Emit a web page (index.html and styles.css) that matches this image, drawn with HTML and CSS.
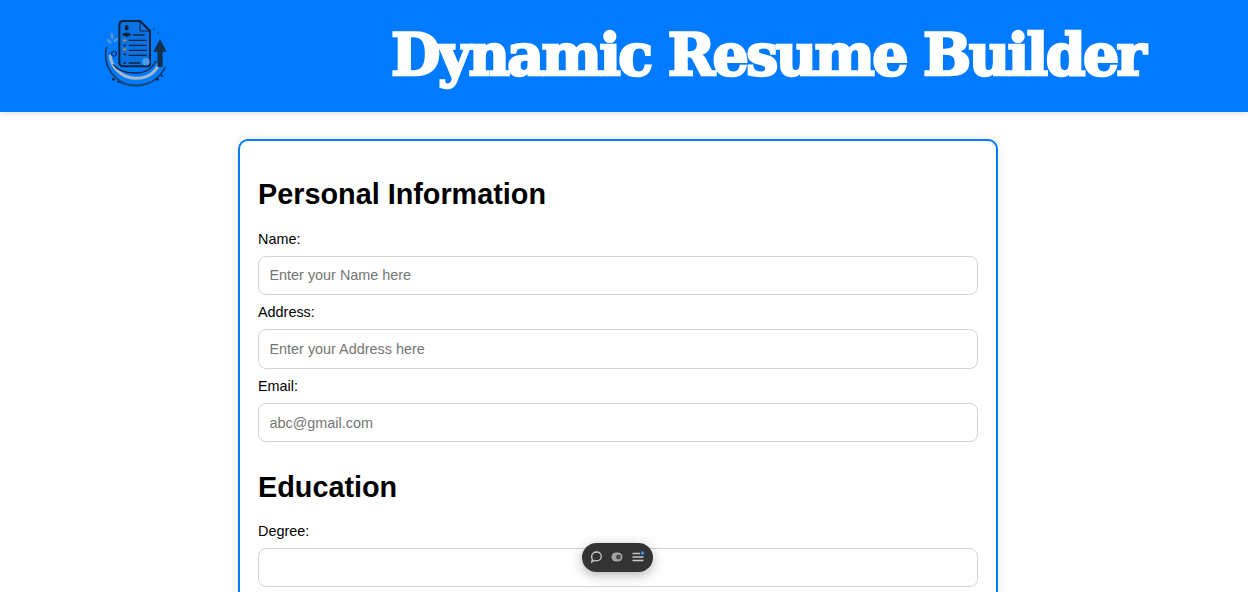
FILE: index.html
```html
<!DOCTYPE html>
<html lang="en">
<head>
<meta charset="utf-8">
<title>Dynamic Resume Builder</title>
<link rel="stylesheet" href="styles.css">
</head>
<body>
<header class="site-header">
  <svg class="logo" viewBox="0 0 270 270" aria-hidden="true">
    <path d="M50 108a92 92 0 0 0 86 116c42 0 74-22 90-56" fill="none" stroke="#123a66" stroke-width="5"/>
    <path d="M60 132a78 78 0 0 0 76 70c46 0 72-26 78-72" fill="none" stroke="#a4b8ca" stroke-width="9"/>
    <path d="M70 160c14 22 40 26 66 26 30 0 50-12 62-36" fill="none" stroke="#12294a" stroke-width="4"/>
    <path d="M86 212c30 14 70 14 100 0" fill="none" stroke="#1b4a80" stroke-width="5"/>
    <path d="M88 42q0-12 12-12h50l30 30v100q0 6-6 6H100q-12 0-12-12z" fill="#0a73e4" stroke="#10233d" stroke-width="6"/>
    <path d="M150 30v30h30" fill="none" stroke="#10233d" stroke-width="3"/>
    <ellipse cx="110" cy="50" rx="6" ry="8" fill="#10233d"/>
    <path d="M96 72c4-10 24-10 28 0l-14 6z" fill="#10233d"/>
    <path d="M128 72h36M116 88h54M116 103h54M116 118h54M116 133h54M116 156h34" stroke="#10233d" stroke-width="4"/>
    <path d="M100 88h8M100 115h8" stroke="#e08a3c" stroke-width="5"/>
    <path d="M100 103h8M100 130h8M100 156h8" stroke="#10233d" stroke-width="5"/>
    <circle cx="168" cy="152" r="11" fill="#4d9be8"/>
    <path d="M202 168V122h-12l20-38 20 38h-12v46z" fill="#14304f"/>
    <circle cx="72" cy="128" r="7" fill="none" stroke="#10233d" stroke-width="5" stroke-dasharray="3 1.500"/>
    <path d="M50 84c10 0 14 6 16 14-10 0-15-5-16-14zM64 64c8 6 8 14 4 22-6-6-8-14-4-22zM84 80c-8 0-14 6-14 14 8 0 13-6 14-14z" fill="#5a93cf"/>
    <circle cx="70" cy="205" r="4" fill="#10233d"/><circle cx="85" cy="213" r="3" fill="#10233d"/><circle cx="202" cy="205" r="4" fill="#10233d"/><circle cx="216" cy="194" r="3" fill="#10233d"/><circle cx="192" cy="55" r="3" fill="#1b4a80"/><circle cx="205" cy="65" r="2.500" fill="#1b4a80"/>
  </svg>
  <h1 class="site-title">Dynamic Resume Builder</h1>
</header>
<main class="page">
  <form class="card">
    <h2 class="section-title">Personal Information</h2>
    <div class="field"><label>Name:</label><input type="text" placeholder="Enter your Name here"></div>
    <div class="field"><label>Address:</label><input type="text" placeholder="Enter your Address here"></div>
    <div class="field"><label>Email:</label><input type="text" placeholder="abc@gmail.com"></div>
    <h2 class="section-title section-next">Education</h2>
    <div class="field"><label>Degree:</label><input type="text"></div>
  </form>
</main>
<div class="toolbar">
  <svg viewBox="0 0 14 14" class="tool"><path d="M7.500 2a4.800 4.400 0 0 1 0 8.800c-.8 0-1.500-.1-2.100-.4L2.800 12l.5-2.700A4.400 4.400 0 0 1 2.700 6.400 4.800 4.400 0 0 1 7.500 2z" fill="none" stroke="#c9c9c9" stroke-width="1.300"/></svg>
  <svg viewBox="0 0 14 14" class="tool"><rect x="1.500" y="2.500" width="11" height="9" rx="4.500" fill="#a3a3a3"/><circle cx="8.500" cy="7" r="2.300" fill="#3a3a3a"/><circle cx="8.500" cy="7" r=".8" fill="#8a8a8a"/></svg>
  <svg viewBox="0 0 14 14" class="tool"><path d="M1.500 3.500h7.500M1.500 7h11M1.500 10.500h11" stroke="#c9c9c9" stroke-width="1.300"/><circle cx="11.500" cy="3" r="1.800" fill="#3b8df0"/></svg>
</div>
</body>
</html>
```
FILE: styles.css
```css
* { box-sizing: border-box; }
html, body { height: 100%; overflow: hidden; }
body { margin: 0; background: #fff; color: #000; font-family: "Liberation Sans", Arial, sans-serif; }
.site-header { height: 112px; background: #007bff; display: flex; align-items: center; padding: 0 104px 0 90px; justify-content: space-between; box-shadow: 0 2px 6px rgba(0,0,0,.12); }
.logo { width: 90px; height: 90px; flex: none; }
.site-title { margin: 0; color: #fff; font-family: "DejaVu Serif", serif; font-weight: 700; font-size: 57px; letter-spacing: -2.6px; line-height: 1; white-space: nowrap; -webkit-text-stroke: 2.5px #fff; transform: translateY(-2px); }
.page { display: flex; justify-content: center; padding: 27px 12px 0 0; }
.card { width: 760px; border: 2px solid #007bff; border-radius: 10px; padding: 18px 18px 20px; box-shadow: 0 0 10px rgba(0,0,0,.1); background: #fff; }
.section-title { margin: 18px 0 19.6px; font-size: 28.8px; line-height: 34px; font-weight: 700; }
.section-next { margin-top: 27.6px; margin-bottom: 18.8px; }
.field label { display: block; font-size: 14.4px; line-height: 17px; margin-bottom: 8px; }
.field + .field { margin-top: 9px; }
.field input { display: block; width: 100%; height: 39.6px; padding: 0 11px 0 10.5px; border: 1px solid #d4d4d4; border-radius: 8px; font: 14.4px "Liberation Sans", Arial, sans-serif; background: #fff; }
.field input::placeholder { color: #757575; opacity: 1; }
.toolbar { position: fixed; left: 582px; top: 543px; width: 71px; height: 29px; border-radius: 15px; background: #333; display: flex; align-items: center; justify-content: space-between; padding: 0 8px 2px 7px; box-shadow: 0 3px 12px rgba(0,0,0,.3); }
.tool { width: 14px; height: 14px; flex: none; }
```
